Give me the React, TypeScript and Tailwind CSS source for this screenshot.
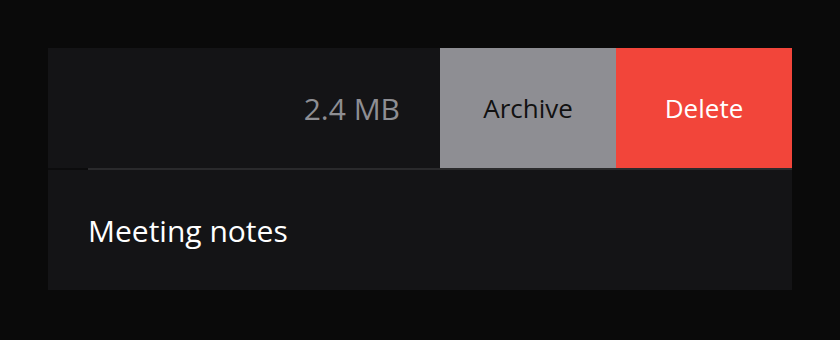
export default function App() {
  return (
    <div className="min-h-screen w-full bg-[#0a0a0a] p-12" style={{ fontFamily: '"Open Sans", "Noto Sans", sans-serif' }}>
      <div className="flex flex-col bg-[#0c0c0d]">
        <div className="flex h-[120px] bg-[#141416]">
          <div className="flex flex-1 items-center justify-end pr-10 text-[30px] text-[#8e8e93]">2.4 MB</div>
          <button className="flex w-[176px] items-center justify-center bg-[#8e8e93] text-[26px] text-[#111111]">Archive</button>
          <button className="flex w-[176px] items-center justify-center bg-[#f2453a] text-[26px] text-white">Delete</button>
        </div>
        <div className="ml-10 h-[2px] bg-[#2a2a2c]" />
        <div className="flex h-[120px] items-center bg-[#141416] px-10 text-[30px] text-white">Meeting notes</div>
      </div>
    </div>
  );
}
